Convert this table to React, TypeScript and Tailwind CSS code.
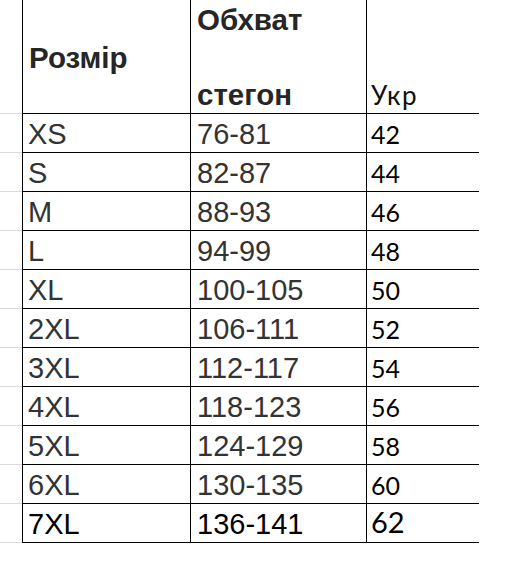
const rows: [string, string, string][] = [
  ["XS", "76-81", "42"],
  ["S", "82-87", "44"],
  ["M", "88-93", "46"],
  ["L", "94-99", "48"],
  ["XL", "100-105", "50"],
  ["2XL", "106-111", "52"],
  ["3XL", "112-117", "54"],
  ["4XL", "118-123", "56"],
  ["5XL", "124-129", "58"],
  ["6XL", "130-135", "60"],
  ["7XL", "136-141", "62"],
];

export default function App() {
  return (
    <div className="w-[508px] h-[572px] bg-white flex font-['Liberation_Sans',Arial,sans-serif]">
      {/* spreadsheet gridlines to the left of the table */}
      <div className="w-[22px] flex flex-col">
        <div className="h-[114px] border-b border-[#dadada]" />
        {rows.map((r) => (
          <div key={r[0]} className="h-[39px] border-b border-[#dadada]" />
        ))}
      </div>

      <div className="w-[457px] flex flex-col">
        <div className="h-[114px] flex border-b border-black">
          <div className="w-[168px] border-l border-black pl-[6px] pt-[40px]">
            <p className="text-[29.5px] leading-[36px] font-bold text-[#262626]">Розмір</p>
          </div>
          <div className="w-[176px] border-l border-black pl-[6px] flex flex-col justify-between">
            <p className="text-[29.5px] leading-[40px] font-bold text-[#262626]">Обхват</p>
            <p className="text-[29.5px] leading-[36px] font-bold text-[#262626]">стегон</p>
          </div>
          <div className="flex-1 border-l border-black pl-[4px] flex flex-col justify-end">
            <p className="font-['Lato',sans-serif] text-[26px] leading-[36px] tracking-[1.5px] text-[#111]">Укр</p>
          </div>
        </div>

        {rows.map(([size, hips, ua], i) => {
          const last = i === rows.length - 1;
          return (
            <div key={size} className="h-[39px] flex border-b border-black">
              <div
                className={`w-[168px] border-l border-black pl-[5px] pt-[2px] text-[29px] leading-[36px] ${
                  last ? "text-black" : "text-[#333]"
                }`}
              >
                {size}
              </div>
              <div
                className={`w-[176px] border-l border-black pl-[6px] pt-[2px] text-[29px] leading-[36px] ${
                  last ? "text-black" : "text-[#333]"
                }`}
              >
                {hips}
              </div>
              <div
                className={`flex-1 border-l border-black pl-[4px] font-['Lato',sans-serif] text-black ${
                  last ? "text-[29px] leading-[36px]" : "pt-[2px] text-[25px] leading-[36px]"
                }`}
              >
                {ua}
              </div>
            </div>
          );
        })}
      </div>
    </div>
  );
}
